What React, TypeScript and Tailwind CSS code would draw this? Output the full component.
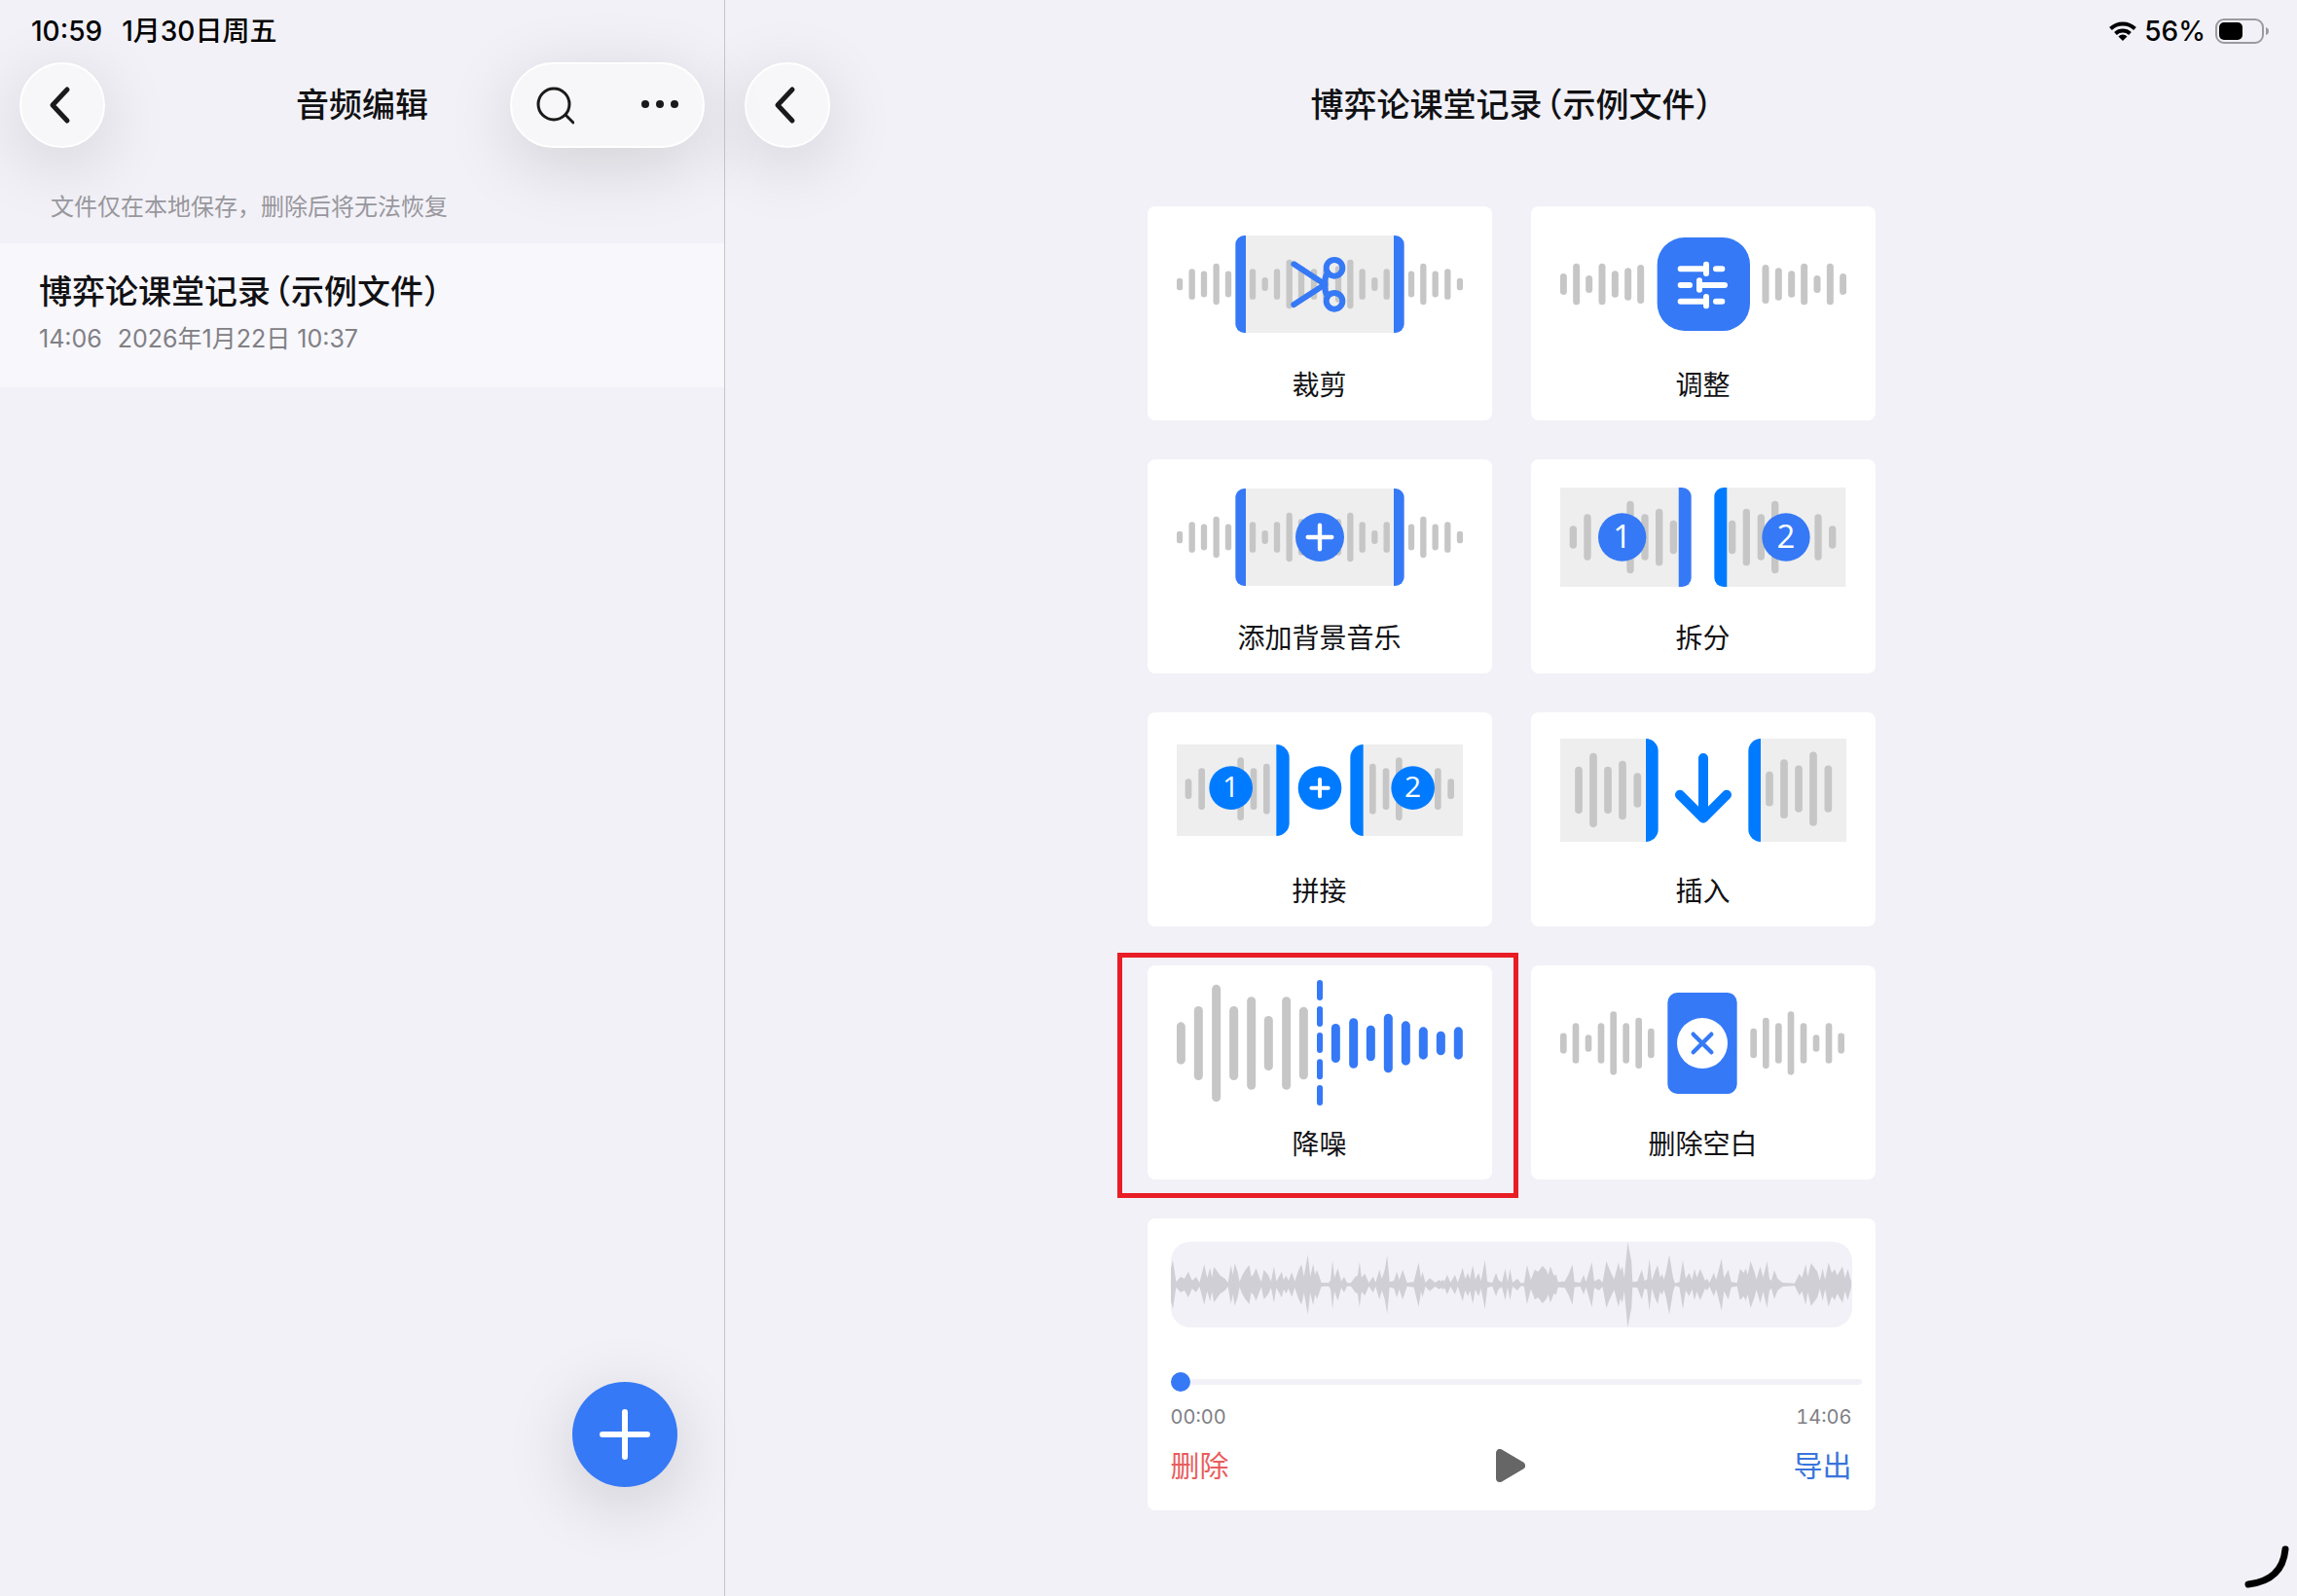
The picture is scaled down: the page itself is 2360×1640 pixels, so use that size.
import React from "react";

type Bar = [x: number, height: number];

const BLUE = "#3579f6";
const SYSTEM_BLUE = "#007bff";
const GRAY = "#c6c6c6";

const Bars = ({ bars, width, cy = 240, color = GRAY }: { bars: Bar[]; width: number; cy?: number; color?: string }) => (
  <g fill={color}>
    {bars.map(([x, h]) => (
      <rect key={x} x={x - width / 2} y={cy - h / 2} width={width} height={h} rx={width / 2} />
    ))}
  </g>
);

const Art = ({ children }: { children: React.ReactNode }) => (
  <svg viewBox="0 0 882 480" className="block w-full" aria-hidden="true">
    {children}
  </svg>
);

const Badge = ({ cx, cy, r, color, label }: { cx: number; cy: number; r: number; color: string; label: string }) => (
  <>
    <circle cx={cx} cy={cy} r={r} fill={color} />
    <text
      x={cx}
      y={cy + r * 0.44}
      textAnchor="middle"
      fill="#fff"
      fontSize={r > 70 ? 99 : 90}
      className="font-['Open_Sans',sans-serif] font-medium"
    >
      {label}
    </text>
  </>
);

const Selection = () => (
  <>
    <path d="M213 90h456v300H213z" fill="#eee" />
    <Bars
      width={19}
      bars={[
        [9, 38], [47, 95], [84, 81], [122, 127], [159, 81],
        [234, 95], [272, 42], [309, 95], [347, 151], [384, 112], [423, 95],
        [459, 95], [498, 112], [535, 151], [572, 95], [610, 42], [647, 95],
        [723, 81], [760, 127], [797, 81], [835, 95], [873, 38],
      ]}
    />
    <path d="M213 90v300h-5a27 27 0 0 1-27-27V117a27 27 0 0 1 27-27z" fill={BLUE} />
    <path d="M669 90v300h5a27 27 0 0 0 27-27V117a27 27 0 0 0-27-27z" fill={BLUE} />
  </>
);

const TrimArt = () => (
  <Art>
    <Selection />
    <g fill="none" stroke={BLUE} strokeWidth="18" strokeLinecap="round" strokeLinejoin="round">
      <circle cx="486" cy="190" r="25" />
      <circle cx="486" cy="292" r="25" />
      <path d="M361 178l96 63-96 62" />
      <path d="M457 241q-2-22 8-36M457 241q-2 22 8 36" />
    </g>
  </Art>
);

const AdjustArt = () => (
  <Art>
    <Bars
      width={21}
      bars={[
        [10, 66], [50, 127], [89, 54], [129, 127], [169, 83], [209, 101], [248, 120],
        [633, 120], [673, 101], [713, 83], [752, 127], [792, 54], [832, 127], [872, 66],
      ]}
    />
    <rect x="299" y="96" width="286" height="288" rx="84" fill={BLUE} />
    <path
      d="M371 193h79M450 179v28M480 193h19M371 243h28M429 229v28M429 243h78M371 293h79M450 279v28M480 293h19"
      fill="none"
      stroke="#fff"
      strokeWidth="18"
      strokeLinecap="round"
    />
  </Art>
);

const MusicArt = () => (
  <Art>
    <Selection />
    <circle cx="441" cy="240" r="75" fill={BLUE} />
    <path d="M404 240h74M441 203v74" stroke="#fff" strokeWidth="13" strokeLinecap="round" />
  </Art>
);

const SplitArt = () => (
  <Art>
    <path d="M0 87h364v306H0zM514 87h366v306H514z" fill="#eee" />
    <Bars
      width={22}
      bars={[
        [40, 70], [84, 142], [216, 223], [261, 142], [305, 176], [349, 103],
        [530, 103], [574, 176], [619, 142], [662, 223], [795, 142], [839, 70],
      ]}
    />
    <path d="M365 87h11a28 28 0 0 1 28 28v250a28 28 0 0 1-28 28h-11z" fill={BLUE} />
    <path d="M514 87h-11a28 28 0 0 0-28 28v250a28 28 0 0 0 28 28h11z" fill={SYSTEM_BLUE} />
    <Badge cx={191} cy={240} r={74} color={BLUE} label="1" />
    <Badge cx={696} cy={240} r={74} color={BLUE} label="2" />
  </Art>
);

const JoinArt = () => (
  <Art>
    <path d="M0 99h307v282H0zM575 99h307v282H575z" fill="#eee" />
    <Bars
      width={20}
      cy={236}
      bars={[
        [36, 62], [77, 128], [197, 195], [237, 128], [277, 155],
        [604, 155], [645, 128], [685, 195], [805, 128], [845, 62],
      ]}
    />
    <path d="M307 99a40 40 0 0 1 40 40v202a40 40 0 0 1-40 40z" fill={SYSTEM_BLUE} />
    <path d="M575 99a40 40 0 0 0-40 40v202a40 40 0 0 0 40 40z" fill={SYSTEM_BLUE} />
    <Badge cx={167} cy={233} r={67} color={SYSTEM_BLUE} label="1" />
    <circle cx="441" cy="233" r="67" fill={SYSTEM_BLUE} />
    <path d="M415 233h52M441 207v52" stroke="#fff" strokeWidth="12" strokeLinecap="round" />
    <Badge cx={728} cy={233} r={67} color={SYSTEM_BLUE} label="2" />
  </Art>
);

const InsertArt = () => (
  <Art>
    <path d="M0 81h263v318H0zM618 81h264v318H618z" fill="#eee" />
    <Bars width={23} bars={[[57, 145], [102, 229], [147, 145], [192, 182], [238, 107]]} />
    <Bars width={23} cy={236} bars={[[645, 107], [690, 182], [735, 145], [780, 229], [826, 145]]} />
    <path d="M264 81a38 38 0 0 1 38 38v242a38 38 0 0 1-38 38z" fill={SYSTEM_BLUE} />
    <path d="M618 81a38 38 0 0 0-38 38v242a38 38 0 0 0 38 38z" fill={SYSTEM_BLUE} />
    <path
      d="M441 141v184M369 254l72 72 72-72"
      fill="none"
      stroke={SYSTEM_BLUE}
      strokeWidth="30"
      strokeLinecap="round"
      strokeLinejoin="round"
    />
  </Art>
);

const DenoiseArt = () => (
  <Art>
    <Bars
      width={27}
      bars={[[13, 130], [67, 228], [122, 361], [176, 228], [230, 287], [283, 168], [338, 287], [391, 224]]}
    />
    <g fill={BLUE}>
      {[45, 126, 207, 289, 369].map((y) => (
        <rect key={y} x="432" y={y} width="18" height="63" rx="9" />
      ))}
    </g>
    <Bars
      width={27}
      color={BLUE}
      bars={[[490, 120], [545, 155], [598, 110], [652, 182], [706, 136], [760, 100], [814, 74], [868, 100]]}
    />
  </Art>
);

const SilenceArt = () => (
  <Art>
    <Bars
      width={20}
      bars={[
        [10, 63], [48, 125], [87, 53], [126, 125], [164, 196], [203, 125], [242, 157], [280, 92],
        [596, 92], [634, 157], [673, 125], [711, 196], [750, 125], [789, 53], [828, 125], [866, 63],
      ]}
    />
    <rect x="331" y="84" width="214" height="312" rx="30" fill={BLUE} />
    <circle cx="438" cy="240" r="78" fill="#fff" />
    <path d="M410 212l56 56M466 212l-56 56" stroke={BLUE} strokeWidth="13" strokeLinecap="round" />
  </Art>
);

const tools = [
  { label: "裁剪", art: <TrimArt /> },
  { label: "调整", art: <AdjustArt /> },
  { label: "添加背景音乐", art: <MusicArt /> },
  { label: "拆分", art: <SplitArt /> },
  { label: "拼接", art: <JoinArt /> },
  { label: "插入", art: <InsertArt /> },
  { label: "降噪", art: <DenoiseArt />, marked: true },
  { label: "删除空白", art: <SilenceArt /> },
];

// [x, amplitude] pairs, mirrored around the centre line
const samples: Bar[] = [
  [66, 50], [70, 75], [77, 8], [86, 24], [94, 18], [102, 40], [110, 12], [118, 24], [125, 6], [135, 62],
  [141, 20], [147, 52], [151, 22], [155, 55], [163, 38], [168, 28], [178, 18], [184, 6], [190, 60], [194, 30],
  [198, 65], [204, 40], [208, 8], [213, 28], [220, 45], [228, 60], [232, 25], [236, 30], [242, 50], [250, 18],
  [253, 8], [258, 46], [267, 30], [273, 10], [279, 56], [284, 10], [295, 40], [299, 14], [304, 28], [309, 12],
  [316, 38], [322, 10], [330, 45], [336, 62], [341, 25], [349, 92], [354, 25], [360, 64], [364, 30], [368, 45],
  [377, 6], [392, 5], [396, 14], [400, 75], [404, 20], [411, 50], [418, 10], [424, 24], [430, 5], [438, 5],
  [447, 24], [452, 28], [456, 70], [460, 22], [467, 34], [475, 5], [484, 25], [489, 6], [497, 46], [502, 18],
  [508, 46], [513, 90], [518, 8], [527, 12], [533, 40], [538, 14], [545, 46], [554, 6], [568, 8], [578, 68],
  [583, 20], [586, 40], [592, 6], [601, 20], [612, 6], [620, 14], [625, 10], [628, 16], [631, 9], [637, 30],
  [644, 6], [653, 30], [659, 6], [669, 52], [674, 18], [680, 36], [684, 18], [690, 60], [695, 16], [702, 36],
  [707, 12], [715, 76], [720, 10], [730, 5], [738, 36], [743, 14], [750, 7], [757, 48], [762, 8], [767, 48],
  [772, 6], [782, 18], [790, 4], [796, 6], [802, 60], [810, 14], [818, 46], [825, 40], [834, 58], [842, 44],
  [846, 30], [850, 56], [858, 26], [862, 32], [866, 8], [880, 10], [888, 32], [896, 62], [900, 8], [912, 6],
  [919, 30], [924, 8], [936, 70], [941, 10], [951, 18], [958, 6], [966, 72], [973, 45], [982, 16], [991, 68],
  [995, 42], [999, 56], [1003, 20], [1010, 132], [1018, 70], [1020, 8], [1030, 10], [1039, 46], [1045, 12],
  [1050, 16], [1055, 80], [1060, 12], [1066, 40], [1072, 60], [1077, 22], [1081, 32], [1085, 16], [1090, 45],
  [1096, 92], [1104, 20], [1108, 4], [1117, 8], [1124, 76], [1130, 18], [1137, 36], [1143, 14], [1148, 48],
  [1153, 22], [1160, 48], [1170, 12], [1174, 18], [1179, 6], [1188, 36], [1193, 14], [1204, 80], [1209, 20],
  [1218, 46], [1224, 8], [1236, 5], [1242, 48], [1250, 36], [1254, 50], [1258, 30], [1264, 72], [1272, 40],
  [1276, 16], [1284, 56], [1290, 22], [1298, 72], [1303, 18], [1307, 12], [1313, 44], [1320, 18], [1330, 6],
  [1355, 4], [1365, 34], [1370, 20], [1378, 62], [1382, 24], [1389, 66], [1402, 40], [1407, 12], [1413, 50],
  [1418, 14], [1425, 68], [1432, 36], [1438, 48], [1443, 28], [1454, 56], [1459, 20], [1465, 48], [1472, 8],
];

const Waveform = () => {
  const top = samples.map(([x, a]) => `${x},${132 - a}`);
  const bottom = [...samples].reverse().map(([x, a]) => `${x},${132 + a}`);
  return (
    <svg
      viewBox="66 0 1408 264"
      preserveAspectRatio="none"
      className="block h-[88px] w-full rounded-[20px] bg-[#f2f1f7]"
      aria-hidden="true"
    >
      <polygon points={[...top, ...bottom].join(" ")} fill="#d0cfd5" />
    </svg>
  );
};

const glass =
  "h-[88px] rounded-full border-2 border-white bg-[#f7f7fa] shadow-[0_16px_72px_rgba(0,0,0,0.14)]";

const BackButton = () => (
  <button type="button" aria-label="返回" className={`${glass} flex w-[88px] items-center justify-center`}>
    <svg viewBox="0 0 40 40" className="size-10" fill="none" aria-hidden="true">
      <path d="M25 4L10 20l15 16" stroke="#1a1a1a" strokeWidth="5" strokeLinecap="round" strokeLinejoin="round" />
    </svg>
  </button>
);

const RecordingName = () => (
  <>
    博弈论课堂记录<span className="ml-1">（示例文件）</span>
  </>
);

const Sidebar = () => (
  <aside className="relative w-[745px] shrink-0 border-r border-[#c6c5ca]">
    <div className="flex h-16 items-center gap-5 px-8 text-[28px] font-medium text-black">
      <span>10:59</span>
      <span>1月30日周五</span>
    </div>
    <header className="grid grid-cols-[1fr_auto_1fr] items-center px-5">
      <BackButton />
      <h1 className="text-[34px] leading-[48px] font-medium">音频编辑</h1>
      <div className={`${glass} flex w-[200px] items-center justify-between justify-self-end px-6`}>
        <button type="button" aria-label="搜索">
          <svg viewBox="0 0 40 40" className="size-10" fill="none" stroke="#1a1a1a" strokeWidth="3" aria-hidden="true">
            <circle cx="19" cy="19" r="16" />
            <path d="M31 30l8 8" strokeLinecap="round" />
          </svg>
        </button>
        <button type="button" aria-label="更多">
          <svg viewBox="0 0 40 40" className="size-10" fill="#1a1a1a" aria-hidden="true">
            <circle cx="5" cy="19" r="4" />
            <circle cx="20" cy="19" r="4" />
            <circle cx="35" cy="19" r="4" />
          </svg>
        </button>
      </div>
    </header>
    <p className="px-[52px] pt-11 pb-5 text-2xl leading-[34px] text-[#98979d]">文件仅在本地保存，删除后将无法恢复</p>
    <ul>
      <li>
        <a href="#recording" className="block bg-[#f8f7fc] px-10 pt-[30px] pb-[34px]">
          <h2 className="text-[34px] leading-10 font-medium [font-feature-settings:'halt']">
            <RecordingName />
          </h2>
          <p className="mt-3 flex gap-4 text-[25px] leading-8 text-[#808085]">
            <span>14:06</span>
            <span>2026年1月22日 10:37</span>
          </p>
        </a>
      </li>
    </ul>
    <button
      type="button"
      aria-label="新建"
      className="absolute right-12 bottom-28 flex size-[108px] items-center justify-center rounded-full bg-[#3579f6] shadow-[0_16px_72px_rgba(0,0,0,0.16)]"
    >
      <svg viewBox="0 0 52 52" className="size-[52px]" stroke="#fff" strokeWidth="6" strokeLinecap="round" aria-hidden="true">
        <path d="M3 26h46M26 3v46" />
      </svg>
    </button>
  </aside>
);

const StatusIcons = () => (
  <div className="flex h-16 items-center justify-end px-7 text-[28px] font-medium text-black">
    <svg viewBox="0 0 28 20" className="h-5 w-7" fill="none" stroke="#000" strokeWidth="4" aria-hidden="true">
      <path d="M1.500 7.500a18 18 0 0 1 25 0M6.500 12.500a11 11 0 0 1 15 0" />
      <path d="M14 20l-4.500-4.600a6.500 6.500 0 0 1 9 0z" fill="#000" stroke="none" />
    </svg>
    <span className="ml-2">56%</span>
    <svg viewBox="0 0 56 26" className="ml-2.5 h-[26px] w-14" aria-hidden="true">
      <rect x="1" y="1" width="48" height="24" rx="8" fill="none" stroke="#9b9a9f" strokeWidth="2" />
      <rect x="4" y="4" width="24" height="18" rx="5" />
      <path d="M52 9q3 1 3 4t-3 4z" fill="#9b9a9f" />
    </svg>
  </div>
);

const ToolGrid = () => (
  <div className="grid grid-cols-2 gap-10">
    {tools.map((tool) => (
      <div key={tool.label} className="relative">
        <button type="button" className="block w-full rounded-lg bg-white px-[30px] pb-4 text-center">
          {tool.art}
          <span className="mt-1 block text-[28px] leading-10">{tool.label}</span>
        </button>
        {tool.marked && (
          <span className="pointer-events-none absolute -top-[13px] -right-[27px] -bottom-[19px] -left-[31px] border-[5px] border-[#e91d25]" />
        )}
      </div>
    ))}
  </div>
);

const Player = () => (
  <section className="mt-10 rounded-lg bg-white px-6 pt-6 pb-[26px]">
    <Waveform />
    <div className="-mr-[10px] mt-[46px]">
      <input
        type="range"
        min="0"
        max="846"
        defaultValue="0"
        aria-label="播放进度"
        className="block h-5 w-full appearance-none bg-transparent [&::-webkit-slider-runnable-track]:h-[6px] [&::-webkit-slider-runnable-track]:rounded-full [&::-webkit-slider-runnable-track]:bg-[#f2f1f7] [&::-webkit-slider-thumb]:-mt-[7px] [&::-webkit-slider-thumb]:size-5 [&::-webkit-slider-thumb]:appearance-none [&::-webkit-slider-thumb]:rounded-full [&::-webkit-slider-thumb]:bg-[#3579f6]"
      />
    </div>
    <div className="mt-3 flex justify-between text-xl leading-7 text-[#808085] tabular-nums">
      <span>00:00</span>
      <span>14:06</span>
    </div>
    <div className="mt-4 grid grid-cols-3 items-center text-[30px] leading-10">
      <button type="button" className="justify-self-start text-[#e85d5d]">
        删除
      </button>
      <button type="button" aria-label="播放" className="justify-self-center">
        <svg viewBox="0 0 30 34" className="h-[34px] w-[30px]" aria-hidden="true">
          <path
            d="M4 4v26l22-13z"
            fill="#666"
            stroke="#666"
            strokeWidth="8"
            strokeLinejoin="round"
          />
        </svg>
      </button>
      <button type="button" className="justify-self-end text-[#3a74db]">
        导出
      </button>
    </div>
  </section>
);

const App = () => {
  return (
    <div className="relative flex min-h-screen overflow-hidden bg-[#f2f1f7] font-['Inter','Noto_Sans_CJK_SC',sans-serif] text-[#111114]">
      <Sidebar />
      <main className="min-w-0 flex-1">
        <StatusIcons />
        <header className="grid grid-cols-[1fr_auto_1fr] items-center px-5">
          <BackButton />
          <h1 className="text-[34px] leading-[48px] font-medium [font-feature-settings:'halt']">
            <RecordingName />
          </h1>
        </header>
        <div className="mx-auto mt-[60px] max-w-[748px]">
          <ToolGrid />
          <Player />
        </div>
      </main>
      <svg viewBox="0 0 60 60" className="absolute right-0 bottom-0 size-[60px]" fill="none" aria-hidden="true">
        <path d="M10 48Q45 44 48 12" stroke="#000" strokeWidth="7" strokeLinecap="round" />
      </svg>
    </div>
  );
};

export default App;
